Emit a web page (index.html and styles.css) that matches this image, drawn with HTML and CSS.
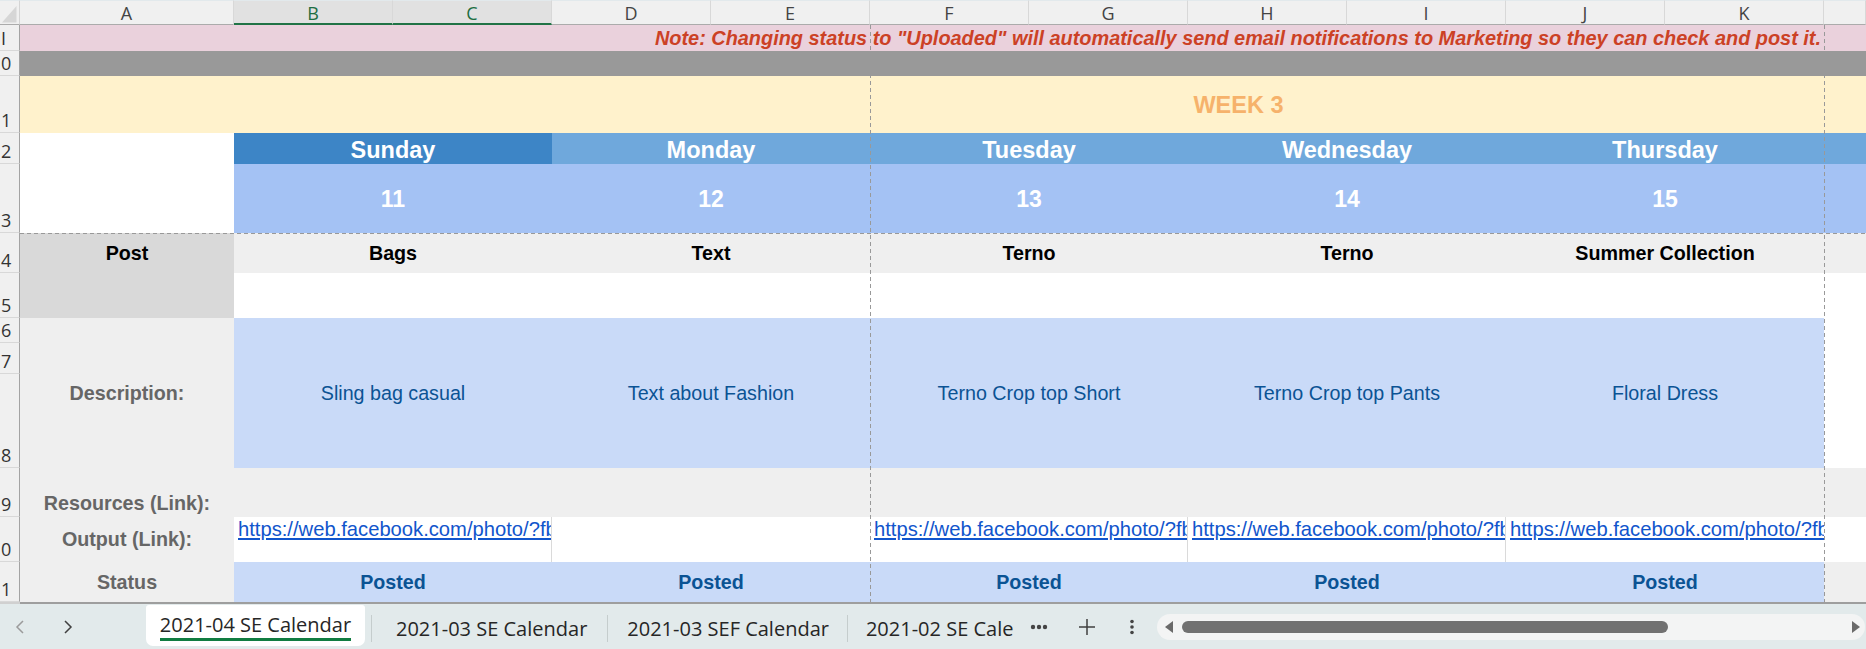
FILE: index.html
```html
<!DOCTYPE html>
<html>
<head>
<meta charset="utf-8">
<link rel="stylesheet" href="styles.css">
</head>
<body>
<div class="app">
  <div class="sheet">
    <div class="corner"><svg width="20" height="24" viewBox="0 0 20 24"><polygon points="16.5,5 16.5,21.5 2,21.5" fill="#d6d6d6"/></svg></div>
    <div class="ch">A</div>
    <div class="ch sel">B</div>
    <div class="ch sel">C</div>
    <div class="ch">D</div>
    <div class="ch">E</div>
    <div class="ch">F</div>
    <div class="ch">G</div>
    <div class="ch">H</div>
    <div class="ch">I</div>
    <div class="ch">J</div>
    <div class="ch">K</div>
    <div class="ch"></div>

    <div class="rh r2">I</div>
    <div class="note cfull r2">Note: Changing status to "Uploaded" will automatically send email notifications to Marketing so they can check and post it.</div>

    <div class="rh r3">0</div>
    <div class="grayband cfull r3"></div>

    <div class="rh r4">1</div>
    <div class="week cfull r4">WEEK 3</div>

    <div class="rh r5">2</div>
    <div class="day dark cbc r5">Sunday</div>
    <div class="day cde r5">Monday</div>
    <div class="day cfg r5">Tuesday</div>
    <div class="day chi r5">Wednesday</div>
    <div class="day cjk r5">Thursday</div>
    <div class="day cl r5"></div>

    <div class="rh r6">3</div>
    <div class="num cbc r6">11</div>
    <div class="num cde r6">12</div>
    <div class="num cfg r6">13</div>
    <div class="num chi r6">14</div>
    <div class="num cjk r6">15</div>
    <div class="num cl r6"></div>

    <div class="rh r7">4</div>
    <div class="post ca r7s2">Post</div>
    <div class="topic cbc r7">Bags</div>
    <div class="topic cde r7">Text</div>
    <div class="topic cfg r7">Terno</div>
    <div class="topic chi r7">Terno</div>
    <div class="topic cjk r7">Summer Collection</div>
    <div class="topic cl r7"></div>

    <div class="rh r8">5</div>
    <div class="rh r9">6</div>
    <div class="rh r10">7</div>
    <div class="rh r11">8</div>
    <div class="label ca r9s3">Description:</div>
    <div class="desc cbc r9s3">Sling bag casual</div>
    <div class="desc cde r9s3">Text about Fashion</div>
    <div class="desc cfg r9s3">Terno Crop top Short</div>
    <div class="desc chi r9s3">Terno Crop top Pants</div>
    <div class="desc cjk r9s3">Floral Dress</div>

    <div class="rh r12">9</div>
    <div class="label bottom ca r12">Resources (Link):</div>
    <div class="res cbl r12"></div>

    <div class="rh r13">0</div>
    <div class="label ca r13">Output (Link):</div>
    <div class="link cbc r13 ruled"><a href="#">https://web.facebook.com/photo/?fb</a></div>
    <div class="link cde r13"></div>
    <div class="link cfg r13 ruled"><a href="#">https://web.facebook.com/photo/?fb</a></div>
    <div class="link chi r13 ruled"><a href="#">https://web.facebook.com/photo/?fb</a></div>
    <div class="link cjk r13"><a href="#">https://web.facebook.com/photo/?fb</a></div>

    <div class="rh r14">1</div>
    <div class="label ca r14">Status</div>
    <div class="status cbc r14">Posted</div>
    <div class="status cde r14">Posted</div>
    <div class="status cfg r14">Posted</div>
    <div class="status chi r14">Posted</div>
    <div class="status cjk r14">Posted</div>
    <div class="res cl r14"></div>

    <div class="pb pb-v1"></div>
    <div class="pb pb-v2"></div>
    <div class="pb pb-h"></div>
  </div>
  <div class="sheet-end"></div>

  <div class="tabbar">
    <div class="nav">
      <span class="nav-btn"><svg width="10" height="14" viewBox="0 0 10 14"><polyline points="8,1 2,7 8,13" fill="none" stroke="#9b9b9b" stroke-width="1.5"/></svg></span>
      <span class="nav-btn"><svg width="10" height="14" viewBox="0 0 10 14"><polyline points="2,1 8,7 2,13" fill="none" stroke="#404040" stroke-width="1.5"/></svg></span>
    </div>
    <div class="tab active"><span class="tab-label">2021-04 SE Calendar</span></div>
    <div class="sep"></div>
    <div class="tab t2">2021-03 SE Calendar</div>
    <div class="sep"></div>
    <div class="tab t3">2021-03 SEF Calendar</div>
    <div class="sep"></div>
    <div class="tab t4">2021-02 SE Calendar</div>
    <div class="tool more"><svg width="18" height="6" viewBox="0 0 18 6"><circle cx="3" cy="3" r="2.2" fill="#444"/><circle cx="9" cy="3" r="2.2" fill="#444"/><circle cx="15" cy="3" r="2.2" fill="#444"/></svg></div>
    <div class="tool add"><svg width="18" height="18" viewBox="0 0 18 18"><path d="M9 1V17M1 9H17" stroke="#404040" stroke-width="1.5"/></svg></div>
    <div class="tool kebab"><svg width="6" height="16" viewBox="0 0 6 16"><circle cx="3" cy="2.5" r="1.8" fill="#444"/><circle cx="3" cy="8" r="1.8" fill="#444"/><circle cx="3" cy="13.5" r="1.8" fill="#444"/></svg></div>
    <div class="scroll">
      <svg class="arrow" width="10" height="12" viewBox="0 0 10 12"><polygon points="9,0 9,12 1,6" fill="#6a6a6a"/></svg>
      <div class="thumb"></div>
      <div class="track-rest"></div>
      <svg class="arrow" width="10" height="12" viewBox="0 0 10 12"><polygon points="1,0 1,12 9,6" fill="#6a6a6a"/></svg>
    </div>
  </div>
</div>
</body>
</html>
```

FILE: styles.css
```css
* { box-sizing: border-box; margin: 0; padding: 0; }
html, body { width: 1866px; height: 649px; overflow: hidden; }
body { background: #fff; font-family: "Liberation Sans", Arial, sans-serif; }

.app { display: flex; flex-direction: column; height: 649px; }

.sheet {
  position: relative;
  display: grid;
  grid-template-columns: 20px 214px repeat(10, 159px) 1fr;
  grid-template-rows: 25px 26px 25px 57px 31px 69px 40px 45px 25px 31px 94px 49px 45px 40px;
}

/* placement */
.r2 { grid-row: 2; } .r3 { grid-row: 3; } .r4 { grid-row: 4; } .r5 { grid-row: 5; }
.r6 { grid-row: 6; } .r7 { grid-row: 7; } .r8 { grid-row: 8; } .r9 { grid-row: 9; }
.r10 { grid-row: 10; } .r11 { grid-row: 11; } .r12 { grid-row: 12; } .r13 { grid-row: 13; }
.r14 { grid-row: 14; }
.r7s2 { grid-row: 7 / span 2; }
.r9s3 { grid-row: 9 / span 3; }
.ca { grid-column: 2; }
.cbc { grid-column: 3 / 5; }
.cde { grid-column: 5 / 7; }
.cfg { grid-column: 7 / 9; }
.chi { grid-column: 9 / 11; }
.cjk { grid-column: 11 / 13; }
.cl { grid-column: 13; }
.cfull { grid-column: 2 / -1; }
.cbl { grid-column: 3 / -1; }

/* headers */
.corner {
  grid-row: 1; grid-column: 1;
  background: #f0f0f0;
  border-top: 1px solid #e2e9ec;
  border-bottom: 1px solid #ababab;
  border-right: 1px solid #d4d4d4;
}
.corner svg { display: block; }
.ch {
  grid-row: 1;
  background: #f0f0f0;
  border-top: 1px solid #e2e9ec;
  border-bottom: 1px solid #ababab;
  border-right: 1px solid #d8d8d8;
  display: flex; align-items: center; justify-content: center;
  font-family: "Open Sans", "Noto Sans", sans-serif;
  font-size: 18px;
  color: #444;
  padding-top: 1px;
}
.ch.sel { background: #e1e1e1; color: #1e6e42; border-bottom: 2px solid #217346; padding-top: 2px; }

.rh {
  grid-column: 1;
  background: #f0f0f0;
  border-right: 1px solid #a3a3a3;
  border-bottom: 1px solid #d8d8d8;
  display: flex; align-items: flex-end;
  padding-left: 1px; padding-bottom: 2px;
  font-family: "Open Sans", "Noto Sans", sans-serif;
  font-size: 18px; line-height: 20px;
  color: #333;
  overflow: hidden;
}

/* cells */
.note {
  background: #ead1dc;
  color: #cc4125;
  font-weight: bold; font-style: italic;
  font-size: 19.9px;
  display: flex; align-items: center; justify-content: flex-end;
  padding-right: 45px;
  white-space: nowrap;
}
.grayband { background: #999999; }
.week {
  background: #fff2cc;
  color: #f6b26b;
  font-weight: bold; font-size: 23.5px;
  display: flex; align-items: center; justify-content: center;
  padding-left: 591px;
  padding-top: 1px;
}
.day {
  background: #6fa8dc;
  color: #fff;
  font-weight: bold; font-size: 23.5px;
  display: flex; align-items: center; justify-content: center;
  padding-top: 3px;
}
.day.dark { background: #3d85c6; }
.num {
  background: #a4c2f4;
  color: #fff;
  font-weight: bold; font-size: 23px;
  display: flex; align-items: center; justify-content: center;
  padding-top: 2px;
}
.post {
  background: #d9d9d9;
  color: #000;
  font-weight: bold; font-size: 19.7px;
  display: flex; justify-content: center;
  padding-top: 9px;
}
.topic {
  background: #efefef;
  color: #000;
  font-weight: bold; font-size: 19.7px;
  display: flex; align-items: center; justify-content: center;
  white-space: nowrap;
}
.label {
  background: #efefef;
  color: #666;
  font-weight: bold; font-size: 19.7px;
  display: flex; align-items: center; justify-content: center;
  white-space: nowrap;
}
.label.bottom { align-items: flex-end; padding-bottom: 2px; }
.desc {
  background: #c9daf8;
  color: #0b5394;
  font-size: 19.7px;
  display: flex; align-items: center; justify-content: center;
  white-space: nowrap;
}
.res { background: #efefef; }
.link {
  background: #fff;
  overflow: hidden;
  white-space: nowrap;
  padding: 1px 0 0 4px;
  font-size: 20.2px;
  line-height: 22px;
}
.link.ruled { border-right: 1px solid #dadada; }
.link a { color: #1155cc; text-decoration: underline; }
.status {
  background: #c9daf8;
  color: #0b5394;
  font-weight: bold; font-size: 19.7px;
  display: flex; align-items: center; justify-content: center;
}

/* page break lines */
.pb { position: absolute; }
.pb-v1, .pb-v2 {
  top: 25px; bottom: 0; width: 1px;
  background: repeating-linear-gradient(to bottom, #999 0 4px, transparent 4px 7px);
}
.pb-v1 { left: 870px; }
.pb-v2 { left: 1823.5px; }
.pb-h {
  top: 232.5px; left: 20px; right: 0; height: 1px;
  background: repeating-linear-gradient(to right, #999 0 4px, transparent 4px 7px);
}

.sheet-end { height: 2px; background: linear-gradient(to right, #d0d0d0 20px, #9e9e9e 20px); }

/* tab bar */
.tabbar {
  flex: 1;
  background: #e2eaeb;
  display: flex;
  align-items: center;
  font-family: "Open Sans", "Noto Sans", sans-serif;
  font-size: 20px;
  color: #262626;
  white-space: nowrap;
}
.nav { width: 146px; display: flex; align-items: center; align-self: stretch; padding-left: 15px; gap: 38px; }
.nav-btn svg { display: block; }
.tab { display: flex; align-items: center; padding-top: 4px; }
.tab.active {
  align-self: flex-start;
  margin-top: 1px;
  height: 41px;
  width: 219px;
  background: #fff;
  border-radius: 3px 3px 7px 7px;
  padding: 0 12px;
  justify-content: center;
}
.tab-label { border-bottom: 3px solid #107c41; line-height: 26px; padding-top: 2px; }
.sep { width: 1px; height: 27px; background: #c5cdcd; margin-top: 4px; }
.active + .sep { margin-left: 6px; }
.t2 { padding: 4px 20px 0 24px; }
.t3 { padding: 4px 18px 0 19px; }
.t4 { width: 166px; overflow: hidden; padding: 4px 0 0 18px; }
.tool { display: flex; align-items: center; }
.tool svg { display: block; }
.more { margin-left: 16px; }
.add { margin-left: 30px; }
.kebab { margin-left: 33px; }
.scroll {
  margin-left: 22px;
  width: 708px; height: 26px;
  background: #f3f4f4;
  border-radius: 13px;
  display: flex; align-items: center;
  padding: 0 4px 0 7px;
}
.scroll .arrow { display: block; flex: none; }
.thumb { width: 486px; height: 12px; border-radius: 6px; background: #717171; margin-left: 8px; }
.track-rest { flex: 1; }
```
